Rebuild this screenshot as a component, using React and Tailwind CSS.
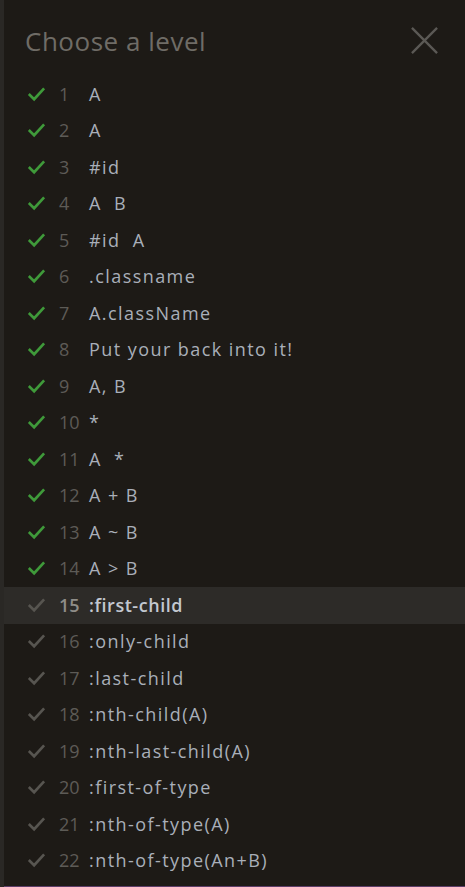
import React from 'react';

const levels = [
  'A', 'A', '#id', 'A  B', '#id  A', '.classname', 'A.className', 'Put your back into it!',
  'A, B', '*', 'A  *', 'A + B', 'A ~ B', 'A > B', ':first-child', ':only-child', ':last-child',
  ':nth-child(A)', ':nth-last-child(A)', ':first-of-type', ':nth-of-type(A)', ':nth-of-type(An+B)',
];

const CURRENT = 15;

const Check = ({ done }) => (
  <svg width="19" height="19" viewBox="0 0 24 24" fill="none" stroke={done ? '#3f9a3a' : '#575550'} strokeWidth="3.3" strokeLinecap="square">
    <path d="M3.5 12.5 9 18 20.5 5.5" />
  </svg>
);

const LevelRow = ({ n, name }) => {
  const current = n === CURRENT;
  const done = n < CURRENT;
  return (
    <div className={`flex h-[36.5px] items-center pl-[23px] ${current ? 'bg-[#2d2b28]' : ''}`}>
      <div className="flex w-[32px] justify-start">
        <Check done={done} />
      </div>
      <span className={`w-[30px] ${current ? 'font-semibold text-[#8f8d88]' : 'text-[#5d5b56]'}`}>{n}</span>
      <span className={`whitespace-pre ${current ? 'font-semibold tracking-[0.03em] text-[#c3c8d0]' : 'tracking-[0.08em] text-[#a9afb9]'}`}>{name}</span>
    </div>
  );
};

export default function App() {
  return (
    <div className="flex h-[887px] overflow-hidden bg-[#1d1a16] font-['Open_Sans',sans-serif] text-[18px]">
      <div className="w-[4px] shrink-0 bg-[#2a2825]" />
      <div className="flex min-w-0 flex-1 flex-col border-b border-[#5c3e68]">
        <div className="flex h-[76px] items-start justify-between pl-[21px] pr-[26px] pt-[22px]">
          <h1 className="text-[26px] leading-[38px] tracking-[0.02em] text-[#6f6c66]">Choose a level</h1>
          <svg className="mt-[4px]" width="29" height="29" viewBox="0 0 30 30" fill="none" stroke="#5b5955" strokeWidth="2.4">
            <path d="M2 2 28 28M28 2 2 28" />
          </svg>
        </div>
        <div className="flex flex-col">
          {levels.map((name, i) => (
            <LevelRow key={i} n={i + 1} name={name} />
          ))}
        </div>
      </div>
    </div>
  );
}
